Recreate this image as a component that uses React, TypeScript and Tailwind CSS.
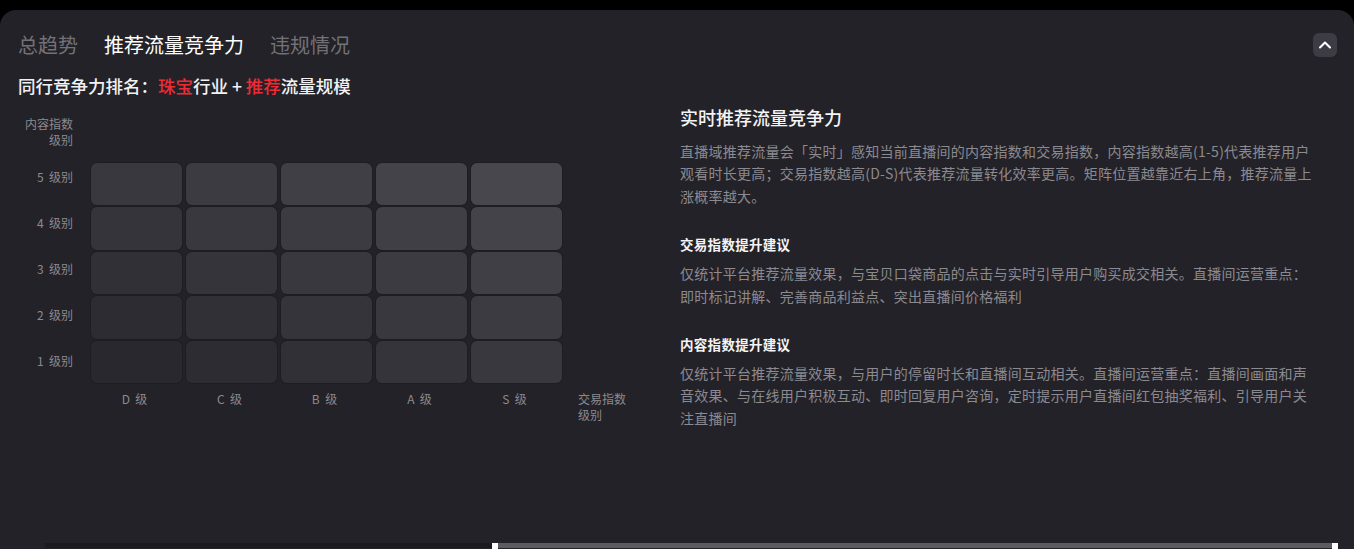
import React from "react";
import { ChevronUp } from "lucide-react";

const cols = ["D", "C", "B", "A", "S"];
const rows = [5, 4, 3, 2, 1];

function cellColor(rowLevel: number, colIdx: number) {
  const level = rowLevel - 1 + colIdx; // 0..8
  const t = level / 8;
  const from = [41, 40, 46];
  const to = [72, 71, 77];
  const c = from.map((f, i) => Math.round(f + (to[i] - f) * t));
  return `rgb(${c[0]},${c[1]},${c[2]})`;
}

const para1 = [
  "直播域推荐流量会「实时」感知当前直播间的内容指数和交易指数，内容指数越高(1-5)代表推荐用户",
  "观看时长更高；交易指数越高(D-S)代表推荐流量转化效率更高。矩阵位置越靠近右上角，推荐流量上",
  "涨概率越大。",
];
const para2 = [
  "仅统计平台推荐流量效果，与宝贝口袋商品的点击与实时引导用户购买成交相关。直播间运营重点：",
  "即时标记讲解、完善商品利益点、突出直播间价格福利",
];
const para3 = [
  "仅统计平台推荐流量效果，与用户的停留时长和直播间互动相关。直播间运营重点：直播间画面和声",
  "音效果、与在线用户积极互动、即时回复用户咨询，定时提示用户直播间红包抽奖福利、引导用户关",
  "注直播间",
];

function Para({ lines, className }: { lines: string[]; className?: string }) {
  return (
    <div className={"text-[14px] leading-[22.5px] tracking-[0.25px] text-[#8b8a90] " + (className ?? "")}>
      {lines.map((l, i) => (
        <div key={i} className="whitespace-nowrap">
          {l}
        </div>
      ))}
    </div>
  );
}

export default function App() {
  return (
    <div className="w-[1354px] h-[549px] bg-black pt-[10px] font-['Noto_Sans_CJK_SC',sans-serif] overflow-hidden">
      <div className="h-[539px] bg-[#232228] rounded-t-[16px] flex flex-col">
        <div className="flex-1 pt-[21px] pl-[18px] pr-[17px] flex flex-col">
          {/* header */}
          <div className="flex items-center h-[28px]">
            <div className="flex gap-[26px] text-[20px] leading-[28px]">
              <span className="text-[#727178]">总趋势</span>
              <span className="text-white">推荐流量竞争力</span>
              <span className="text-[#727178]">违规情况</span>
            </div>
            <button className="ml-auto w-6 h-6 rounded-[6px] bg-[#3d3c44] flex items-center justify-center text-white">
              <ChevronUp size={20} strokeWidth={2.5} />
            </button>
          </div>
          {/* subtitle */}
          <div className="mt-[15px] text-[17.5px] leading-[24px] font-medium text-[#f2f2f4]">
            同行竞争力排名：<span className="text-[#ee2b35]">珠宝</span>行业 + <span className="text-[#ee2b35]">推荐</span>流量规模
          </div>
          {/* body */}
          <div className="flex">
            {/* chart */}
            <div className="w-[662px] flex">
              <div className="w-[55px] flex flex-col text-right text-[12px] leading-[16px] text-[#8b8a90]">
                <div className="mt-[18px]">
                  内容指数
                  <br />
                  级别
                </div>
                <div className="mt-[5.5px] flex flex-col">
                  {rows.map((r) => (
                    <div key={r} className="h-[46px] flex items-center justify-end whitespace-nowrap">
                      {r}&nbsp;&nbsp;级别
                    </div>
                  ))}
                </div>
              </div>
              <div className="ml-[18px] mt-[64.5px]">
                <div className="grid grid-cols-[repeat(5,91px)] gap-x-[4px] gap-y-[2px]">
                  {rows.map((r) =>
                    cols.map((c, ci) => (
                      <div
                        key={`${r}-${c}`}
                        className="h-[42.5px] rounded-[6px] shadow-[0_0_0_1px_rgba(24,23,28,0.4)]"
                        style={{ backgroundColor: cellColor(r, ci) }}
                      />
                    ))
                  )}
                </div>
                <div className="mt-[8px] flex text-[12px] leading-[16px] text-[#8b8a90]">
                  {cols.map((c) => (
                    <div key={c} className="w-[91px] mr-[4px] text-center pr-[4px] whitespace-nowrap">
                      {c}&nbsp;&nbsp;级
                    </div>
                  ))}
                  <div className="ml-[12px]">
                    交易指数
                    <br />
                    级别
                  </div>
                </div>
              </div>
            </div>
            {/* right text */}
            <div className="pt-[6px] flex flex-col">
              <div className="text-[18px] leading-[26px] font-medium text-[#f4f4f6]">实时推荐流量竞争力</div>
              <Para lines={para1} className="mt-[9.5px]" />
              <div className="mt-[27px] text-[13.5px] leading-[20px] font-semibold text-[#f4f4f6] tracking-[0.3px]">交易指数提升建议</div>
              <Para lines={para2} className="mt-[8px]" />
              <div className="mt-[26.5px] text-[13.5px] leading-[20px] font-semibold text-[#f4f4f6] tracking-[0.3px]">内容指数提升建议</div>
              <Para lines={para3} className="mt-[8px]" />
            </div>
          </div>
        </div>
        {/* bottom scrollbar */}
        <div className="h-[6px] flex items-start pl-[45px] pr-[16px]">
          <div className="w-[447px] h-[5px] bg-[#1b1b1e]" />
          <div className="w-[6px] h-[6px] bg-white" />
          <div className="flex-1 h-[5px] bg-[#5b5b60]" />
          <div className="w-[6px] h-[6px] bg-white" />
        </div>
      </div>
    </div>
  );
}
